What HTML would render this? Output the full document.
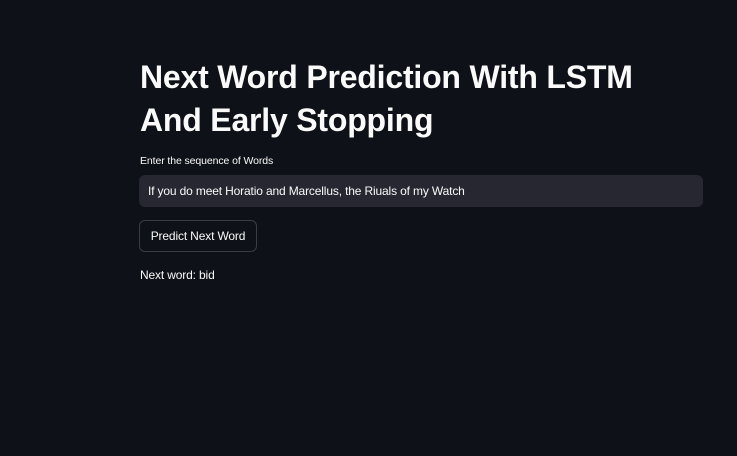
<!DOCTYPE html>
<html><head><meta charset="utf-8">
<style>
html,body{margin:0;padding:0;width:737px;height:456px;background:#0e1117;overflow:hidden;font-family:"Liberation Sans",sans-serif;color:#fafafa}
h1{position:absolute;left:140px;top:56px;margin:0;font-size:32px;line-height:43px;font-weight:700;letter-spacing:-0.2px;width:595px}
.lbl{position:absolute;left:140px;top:155px;font-size:10.5px;letter-spacing:-0.1px;color:#fafafa}
.inp{position:absolute;left:139px;top:175px;width:564px;height:32px;background:#262730;border-radius:6px;box-sizing:border-box;padding-left:9px;font-size:12px;letter-spacing:-0.15px;line-height:32px}
.btn{position:absolute;left:139px;top:220px;width:118px;height:32px;box-sizing:border-box;border:1px solid #3a3d47;border-radius:6px;font-size:12px;letter-spacing:-0.15px;line-height:30px;text-align:center}
.out{position:absolute;left:140px;top:268px;font-size:12px;letter-spacing:-0.15px}
</style></head><body>
<h1>Next Word Prediction With LSTM<br>And Early Stopping</h1>
<div class="lbl">Enter the sequence of Words</div>
<div class="inp">If you do meet Horatio and Marcellus, the Riuals of my Watch</div>
<div class="btn">Predict Next Word</div>
<div class="out">Next word: bid</div>
</body></html>
